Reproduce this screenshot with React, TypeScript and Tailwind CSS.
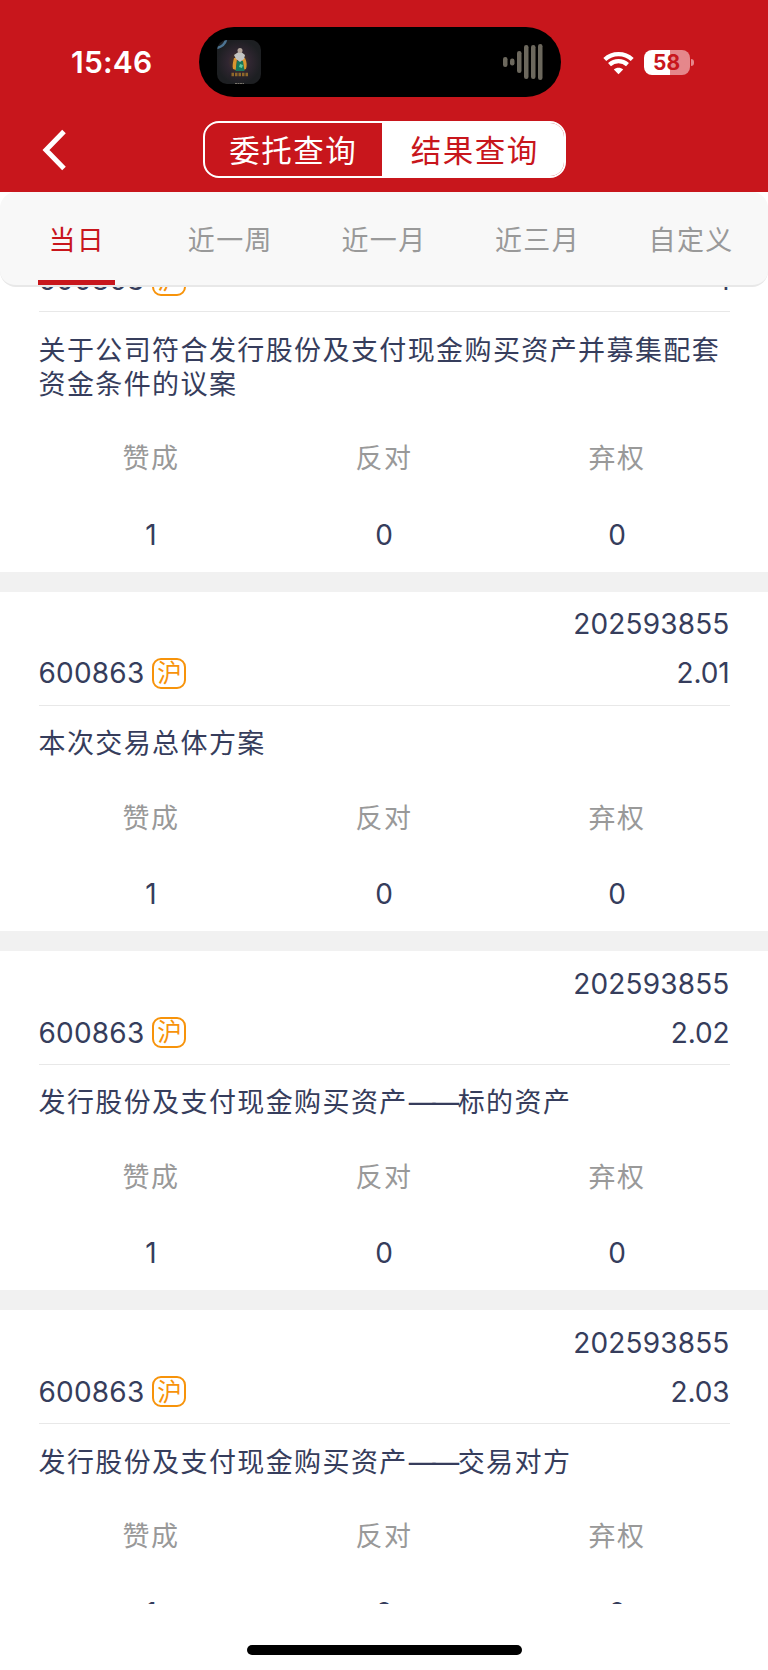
// src/pages/VoteResult.tsx
import React, { useState } from "react";

type Vote = {
  id: string;
  meeting: string;
  code: string;
  market: string;
  no: string;
  title: string;
  agree: number;
  against: number;
  abstain: number;
};

const VOTES: Vote[] = [
  { id: "1", meeting: "202593855", code: "600863", market: "沪", no: "1", title: "关于公司符合发行股份及支付现金购买资产并募集配套资金条件的议案", agree: 1, against: 0, abstain: 0 },
  { id: "2", meeting: "202593855", code: "600863", market: "沪", no: "2.01", title: "本次交易总体方案", agree: 1, against: 0, abstain: 0 },
  { id: "3", meeting: "202593855", code: "600863", market: "沪", no: "2.02", title: "发行股份及支付现金购买资产——标的资产", agree: 1, against: 0, abstain: 0 },
  { id: "4", meeting: "202593855", code: "600863", market: "沪", no: "2.03", title: "发行股份及支付现金购买资产——交易对方", agree: 1, against: 0, abstain: 0 },
];

const RANGES = ["当日", "近一周", "近一月", "近三月", "自定义"];

// sound bars in the island: x, top, height
const BARS = [
  [0, 13, 10],
  [7, 14.5, 7],
  [14, 7, 22],
  [21, 1, 34],
  [28, 1, 34],
  [35, 0, 36],
];

function StatusBar() {
  return (
    <div className="flex h-[97px] items-start pt-[27px]">
      <div className="flex h-[70px] w-[199px] items-center pl-[71px] pt-px text-[30px] font-semibold tracking-[0.200px] text-white">
        15:46
      </div>

      <div className="flex h-[70px] w-[362px] items-center justify-between rounded-full bg-black pl-[18px] pr-[18px]">
        <svg width="44" height="44" viewBox="0 0 44 44">
          <defs>
            <radialGradient id="glow" cx="0.5" cy="0.5" r="0.5">
              <stop offset="0" stopColor="#5a3f22" />
              <stop offset="0.5" stopColor="#302631" />
              <stop offset="1" stopColor="#1d1f22" />
            </radialGradient>
            <clipPath id="app">
              <rect width="44" height="44" rx="10" />
            </clipPath>
          </defs>
          <g clipPath="url(#app)">
            <rect width="44" height="44" fill="url(#glow)" />
            <path d="M0 8C4 7 8 4 9 0" fill="none" stroke="#4c7391" strokeWidth="2.5" />
            <path d="M17 18c-1 4-2 8-1 11l3 1 1-12zM28 18c2 4 2 8 1 11l-3 1-1-12z" fill="#d9952f" />
            <path d="M20 21h6l1.500 10h-9z" fill="#16775a" />
            <path d="M23 24l3 1-1 3-3-1z" fill="#5fc9a0" />
            <path d="M17 15l6-4 5 4-1 4-4 3-4-3z" fill="#c3c4c2" />
            <circle cx="23" cy="10.500" r="2.500" fill="#b5a69c" />
            <path d="M14.500 34.500H31" stroke="#a87a2b" strokeWidth="3.500" strokeDasharray="2.500 1" opacity="0.800" />
            <path d="M18 43.500h9" stroke="#77736b" strokeWidth="1" strokeDasharray="2 0.500" />
          </g>
        </svg>
        <svg width="40" height="36" viewBox="0 0 40 36">
          {BARS.map(([x, y, h]) => (
            <rect key={x} x={x} y={y} width="4.500" height={h} rx="2.200" fill="#6c685d" />
          ))}
        </svg>
      </div>

      <div className="flex h-[70px] items-center pl-[42px]">
        <svg width="31" height="24" viewBox="0 0 31 24" className="mt-px">
          <g fill="none" stroke="#fff" strokeWidth="4.300">
            <path d="M1.800 8.500C9.500 1.300 21.500 1.300 29.200 8.500" />
            <path d="M6.500 13.700C11.700 9 19.300 9 24.500 13.700" />
          </g>
          <path d="M15.500 23.200l-4.700-4.700c2.700-2.300 6.700-2.300 9.400 0z" fill="#fff" />
        </svg>
        <div className="ml-[10px] mt-px flex items-center">
          <div className="flex h-[25px] w-[46px] items-center justify-center rounded-[8px] bg-linear-to-r from-white from-57% to-[#e5878b] to-57% pt-px pr-px text-[21px] font-bold text-[#c8161c]">
            58
          </div>
          <div className="ml-[1px] h-[7px] w-[3px] rounded-r-full bg-[#e5878b]" />
        </div>
      </div>
    </div>
  );
}

function VoteCard({ vote }: { vote: Vote }) {
  const [head, tail] = vote.title.split("——");
  const cols = [
    { label: "赞成", value: vote.agree },
    { label: "反对", value: vote.against },
    { label: "弃权", value: vote.abstain },
  ];

  return (
    <article className="border-b-[20px] border-[#f1f1f1] bg-white pl-[38.500px] pr-[38.500px] pt-[7.500px] text-[#363d5c]">
      <div className="h-[50px] text-right text-[28px] leading-[50px] tracking-[0.150px]">{vote.meeting}</div>
      <div className="flex h-[56.250px] justify-between border-b-[1.500px] border-[#e8e8e8] text-[28px] leading-[49.500px]">
        <div className="flex items-start">
          <span className="tracking-[0.200px]">{vote.code}</span>
          <span className="ml-2 mt-[8.500px] flex h-[31px] w-[34px] items-center justify-center rounded-[9px] border-2 border-[#f7930a] text-[24.500px] leading-none text-[#f7930a]">
            {vote.market}
          </span>
        </div>
        <span className="tracking-[-0.100px]">{vote.no}</span>
      </div>
      <h2 className="mt-[21.500px] -mr-4 text-[27px] leading-[34px] tracking-[1.400px]">
        {head}
        {tail && <span className="ml-px mr-[2px] tracking-[-3.500px]">——</span>}
        {tail}
      </h2>
      <div className="-mx-[4px] mt-[32.500px] grid grid-cols-3 text-center">
        {cols.map((c) => (
          <div key={c.label}>
            <div className="h-[50px] text-[27px] leading-[50px] tracking-[1.400px] text-[#999]">{c.label}</div>
            <div className="mt-[25.500px] h-[62px] text-[28px] leading-[50px]">{c.value}</div>
          </div>
        ))}
      </div>
    </article>
  );
}

export default function VoteResult() {
  const [range, setRange] = useState<string>("当日");

  return (
    <div className="flex h-[1670px] w-[768px] flex-col overflow-hidden bg-white font-['Inter','Noto_Sans_CJK_SC',sans-serif]">
      {/* Header */}
      <header className="h-[191.500px] shrink-0 bg-[#c8161c]">
        <StatusBar />
        <div className="mt-[24px] flex h-[57px] items-center">
          <button className="ml-[42px] w-[160.500px]">
            <svg width="26" height="42" viewBox="0 0 26 42">
              <path d="M22 2.500L4 21l18 18.500" fill="none" stroke="#fff" strokeWidth="5" />
            </svg>
          </button>
          <div className="flex h-[57px] w-[363px] overflow-hidden rounded-[16px] border-2 border-white text-[30.500px] tracking-[1.500px]">
            <button className="w-[177.500px] pt-[2px] text-white">委托查询</button>
            <button className="flex-1 bg-white pl-[4px] pt-[2px] text-[#c8161c]">结果查询</button>
          </div>
        </div>
      </header>

      {/* Date range tabs */}
      <nav className="flex h-[95.500px] shrink-0 rounded-[16px] border-b-2 border-[#e8e8e8] bg-[#f8f8f8]">
        {RANGES.map((r) => (
          <button key={r} onClick={() => setRange(r)} className="flex flex-1 flex-col items-center text-[27px] tracking-[1.400px]">
            <span className={r === range ? "h-[88.500px] leading-[98px] text-[#c8161c]" : "h-[88.500px] leading-[98px] text-[#999]"}>{r}</span>
            {r === range && <span className="h-[5px] w-[77px] bg-[#c8161c]" />}
          </button>
        ))}
      </nav>

      {/* Votes, scrolled a little way down */}
      <main className="h-[1317px] shrink-0 overflow-hidden">
        <div className="-mt-[88.500px]">
          {VOTES.map((v) => (
            <VoteCard key={v.id} vote={v} />
          ))}
        </div>
      </main>

      <footer className="flex flex-1 justify-center pt-[41px]">
        <div className="h-[10px] w-[275px] rounded-full bg-black" />
      </footer>
    </div>
  );
}
